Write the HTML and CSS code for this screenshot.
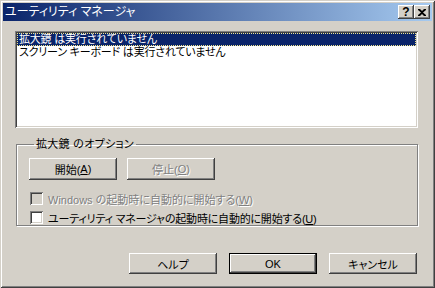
FILE: index.html
```html
<!DOCTYPE html>
<html lang="ja">
<head>
<meta charset="utf-8">
<link rel="stylesheet" href="styles.css">
</head>
<body>
<div class="window">
  <div class="titlebar">
    <span class="title">ユーティリティ マネージャ</span>
    <div class="tbuttons">
      <span class="tbtn help">?</span>
      <span class="tbtn close"><svg width="8" height="7" viewBox="0 0 8 7"><path d="M0 0h2l2 2 2-2h2v1L5 3.5 8 6v1H6L4 5 2 7H0V6l3-2.5L0 1z" fill="#000"/></svg></span>
    </div>
  </div>
  <div class="content">
    <div class="listbox">
      <div class="item selected"><span>拡大鏡 は実行されていません</span></div>
      <div class="item">スクリーン キーボード は実行されていません</div>
    </div>
    <fieldset class="group">
      <legend>拡大鏡 のオプション</legend>
      <div class="grow">
        <span class="btn">開始(<u>A</u>)</span>
        <span class="btn disabled">停止(<u>O</u>)</span>
      </div>
      <div class="check disabled"><span class="box"></span><span class="lbl">Windows の起動時に自動的に開始する(<u>W</u>)</span></div>
      <div class="check"><span class="box"></span><span class="lbl">ユーティリティ マネージャの起動時に自動的に開始する(<u>U</u>)</span></div>
    </fieldset>
    <div class="footer">
      <span class="btn">ヘルプ</span>
      <span class="btn default">OK</span>
      <span class="btn">キャンセル</span>
    </div>
  </div>
</div>
</body>
</html>
```
FILE: styles.css
```css
* { box-sizing: border-box; }
html, body { margin: 0; padding: 0; background: #d4d0c8; }
body {
  font-family: "Liberation Sans", "Noto Sans CJK JP", sans-serif;
  font-size: 11px;
  font-feature-settings: "palt";
  color: #000;
}
.window {
  width: 435px;
  height: 288px;
  background: #d4d0c8;
  padding: 3px;
  box-shadow: inset 1px 1px 0 #d4d0c8, inset -1px -1px 0 #404040, inset 2px 2px 0 #fff, inset -2px -2px 0 #808080;
  display: flex;
  flex-direction: column;
}
.titlebar {
  height: 18px;
  background: linear-gradient(to right, #0a246a, #a6caf0);
  display: flex;
  align-items: center;
  justify-content: space-between;
  padding: 0 2px 0 2px;
}
.title {
  color: #fff;
  font-size: 12px;
  line-height: 18px;
  white-space: nowrap;
}
.tbuttons { display: flex; gap: 0; }
.tbtn {
  width: 16px;
  height: 14px;
  background: #d4d0c8;
  box-shadow: inset -1px -1px 0 #404040, inset 1px 1px 0 #fff, inset -2px -2px 0 #808080;
  display: flex;
  align-items: center;
  justify-content: center;
  font-weight: bold;
  font-size: 12px;
  line-height: 14px;
  font-family: "Liberation Sans", sans-serif;
}
.tbtn.help { padding-bottom: 1px; }
.content {
  flex: 1;
  padding: 10px 14px 0 12px;
  display: flex;
  flex-direction: column;
}
.listbox {
  height: 97px;
  background: #fff;
  padding: 2px;
  box-shadow: inset 1px 1px 0 #808080, inset -1px -1px 0 #fff, inset 2px 2px 0 #404040, inset -2px -2px 0 #d4d0c8;
}
.item {
  height: 13px;
  line-height: 13px;
  padding-left: 2px;
  white-space: nowrap;
  letter-spacing: -0.2px;
}
.item.selected {
  background: #0a246a;
  color: #fff;
  outline: 1px dotted #f0e68c;
  outline-offset: -1px;
}
.group {
  margin: 10px 0 0 1px;
  padding: 7px 0 0 12px;
  height: 88px;
  border: 1px solid #808080;
  box-shadow: 1px 1px 0 #fff, inset 1px 1px 0 #fff;
  min-width: 0;
}
.group legend {
  padding: 0 2px;
  margin-left: 5px;
  line-height: 13px;
  letter-spacing: 0.3px;
}
.grow { display: flex; gap: 10px; }
.btn {
  width: 88px;
  height: 22px;
  background: #d4d0c8;
  box-shadow: inset -1px -1px 0 #404040, inset 1px 1px 0 #fff, inset -2px -2px 0 #808080;
  display: flex;
  align-items: center;
  justify-content: center;
  white-space: nowrap;
}
.btn.disabled, .check.disabled .lbl {
  color: #808080;
  text-shadow: 1px 1px 0 #fff;
}
.btn.default {
  border: 1px solid #000;
  box-shadow: inset -1px -1px 0 #404040, inset 1px 1px 0 #fff, inset -2px -2px 0 #808080;
}
.check {
  display: flex;
  align-items: center;
  gap: 5px;
  height: 19px;
  padding-left: 1px;
  white-space: nowrap;
}
.check:last-child .lbl { letter-spacing: -0.2px; }
.grow + .check { margin-top: 9px; }
.box {
  width: 13px;
  height: 13px;
  background: #fff;
  box-shadow: inset 1px 1px 0 #808080, inset -1px -1px 0 #fff, inset 2px 2px 0 #404040, inset -2px -2px 0 #d4d0c8;
}
.check.disabled .box { background: #d4d0c8; }
.footer {
  display: flex;
  justify-content: flex-end;
  gap: 12px;
  margin-top: 27px;
  padding-right: 1px;
}
.footer .btn { height: 21px; }
```
